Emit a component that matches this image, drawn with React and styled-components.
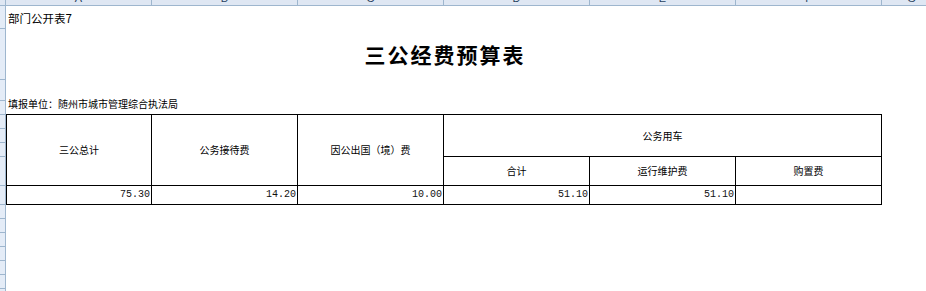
import styled, { createGlobalStyle } from 'styled-components';

const GlobalStyle = createGlobalStyle`
  html, body {
    margin: 0;
    padding: 0;
    background: #ffffff;
    overflow: hidden;
  }
  body {
    font-family: "Noto Sans CJK SC", "Liberation Sans", sans-serif;
    color: #000;
  }
`

const Page = styled.div`
  display: flex;
  flex-direction: column;
  width: 926px;
  height: 291px;
  overflow: hidden;
`

// column letters, only their lower edge shows as in the scrolled sheet
const ColStrip = styled.div`
  display: flex;
  align-items: flex-end;
  height: 5px;
  overflow: hidden;
  background: #dfe7f3;
  border-bottom: 1px solid #9eb6ce;
  flex-shrink: 0;
`

const Corner = styled.div`
  width: 5px;
  height: 14px;
  flex-shrink: 0;
  border-right: 1px solid #9eb6ce;
`

const ColHead = styled.div`
  width: ${(props) => props.$w - 1}px;
  flex-shrink: 0;
  height: 14px;
  line-height: 14px;
  text-align: center;
  font-family: "Liberation Sans", sans-serif;
  font-size: 11px;
  color: #27415f;
  border-right: 1px solid #9eb6ce;
`

const Body = styled.div`
  display: flex;
  flex: 1;
  min-height: 0;
`

const RowStrip = styled.div`
  display: flex;
  flex-direction: column;
  width: 5px;
  flex-shrink: 0;
  background: #e4ecf7;
  border-right: 1px solid #9eb6ce;
  overflow: hidden;
`

const RowHead = styled.div`
  height: ${(props) => props.$h - 1}px;
  flex-shrink: 0;
  border-bottom: 1px solid #9eb6ce;
`

const Sheet = styled.div`
  display: flex;
  flex-direction: column;
  width: 876px;
`

const SheetName = styled.div`
  height: 22px;
  line-height: 22px;
  padding-left: 2px;
  padding-top: 1px;
  box-sizing: border-box;
  font-size: 11.5px;
`

const Title = styled.h1`
  margin: 0;
  height: 51px;
  display: flex;
  align-items: center;
  justify-content: center;
  padding-left: 2px;
  box-sizing: border-box;
  font-size: 21px;
  font-weight: 700;
  letter-spacing: 2px;
`

const Spacer = styled.div`
  height: ${(props) => props.$h}px;
`

const Unit = styled.div`
  height: 17px;
  line-height: 14px;
  padding-left: 2px;
  font-size: 10px;
`

const Grid = styled.div`
  display: grid;
  grid-template-columns: 144px repeat(5, 145px);
  grid-template-rows: 41px 28px 18px;
  gap: 1px;
  padding: 1px;
  background: #000;
`

const Cell = styled.div`
  grid-row: ${(props) => props.$row};
  grid-column: ${(props) => props.$col};
  background: #fff;
  display: flex;
  align-items: center;
  justify-content: ${(props) => (props.$num ? 'flex-end' : 'center')};
  padding-right: ${(props) => (props.$num ? '1px' : '0')};
  font-family: ${(props) =>
    props.$num ? '"Liberation Mono", monospace' : '"Noto Sans CJK SC", sans-serif'};
  font-size: 10px;
  line-height: 12px;
  color: ${(props) => (props.$num ? '#111' : '#000')};
`

const columns = [
  { key: 'A', w: 146 },
  { key: 'B', w: 146 },
  { key: 'C', w: 146 },
  { key: 'D', w: 146 },
  { key: 'E', w: 146 },
  { key: 'F', w: 146 },
  { key: 'G', w: 60 },
  { key: 'H', w: 60 },
]

const rowHeights = [23, 51, 21, 14, 14, 14, 14, 29, 19, 14, 14, 14, 14, 14, 14, 14]

const amounts = ['75.30', '14.20', '10.00', '51.10', '51.10', '']

function App() {
  return (
    <>
      <GlobalStyle />
      <Page>
        <ColStrip>
          <Corner />
          {columns.map((c) => (
            <ColHead key={c.key} $w={c.w}>{c.key}</ColHead>
          ))}
        </ColStrip>
        <Body>
          <RowStrip>
            {rowHeights.map((h, i) => (
              <RowHead key={i} $h={h} />
            ))}
          </RowStrip>
          <Sheet>
            <SheetName>部门公开表7</SheetName>
            <Title>三公经费预算表</Title>
            <Spacer $h={18} />
            <Unit>填报单位：随州市城市管理综合执法局</Unit>
            <Grid>
              <Cell $row="1 / 3" $col="1">三公总计</Cell>
              <Cell $row="1 / 3" $col="2">公务接待费</Cell>
              <Cell $row="1 / 3" $col="3">因公出国（境）费</Cell>
              <Cell $row="1" $col="4 / 7">公务用车</Cell>
              <Cell $row="2" $col="4">合计</Cell>
              <Cell $row="2" $col="5">运行维护费</Cell>
              <Cell $row="2" $col="6">购置费</Cell>
              {amounts.map((a, i) => (
                <Cell key={i} $row="3" $col={i + 1} $num>{a}</Cell>
              ))}
            </Grid>
          </Sheet>
        </Body>
      </Page>
    </>
  )
}

export default App;
